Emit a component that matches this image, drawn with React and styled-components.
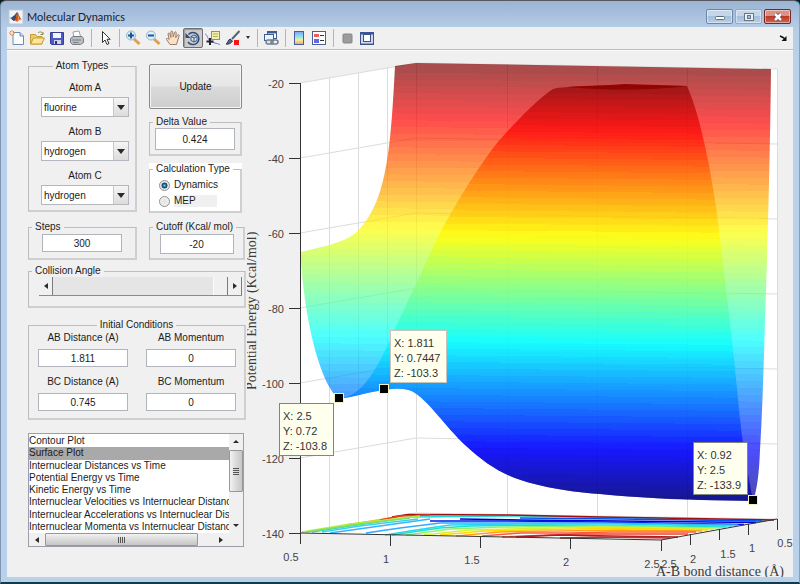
import React, { useState } from 'react';
import styled, { createGlobalStyle, css } from 'styled-components';

const GlobalStyle = createGlobalStyle`
  *, *::before, *::after { box-sizing: border-box; }
  body {
    margin: 0;
    background: #0b1a24;
    color: #1c1c1c;
    font: 10px/12px "Liberation Sans", Arial, sans-serif;
  }
  button, input, select { font: inherit; color: inherit; margin: 0; }
`;

/* ---------- window frame ---------- */

const Frame = styled.div`
  min-height: 100vh;
  display: flex;
  flex-direction: column;
  padding: 0 6px 5px 6px;
  border: 1px solid #4fb7cf;
  border-top-color: #5a5a62;
  border-left-color: #7f95ad;
  border-bottom: 2px solid #123c48;
  border-radius: 6px 6px 0 0;
  background: linear-gradient(#9ab4d2, #b5cce7 26px, #b9d1ea 60px);
`;

const TitleBar = styled.header`
  height: 26px;
  display: flex;
  align-items: center;
  gap: 3px;
  padding: 5px 2px 0 1px;
`;

const Title = styled.h1`
  flex: 1;
  margin: 0;
  font: 11px/14px Lato, "Open Sans", sans-serif;
  color: #17202c;
`;

const WindowButtons = styled.div`
  display: flex;
  gap: 2px;
`;

const WindowButton = styled.button`
  width: 27px;
  height: 15px;
  padding: 0;
  display: grid;
  place-items: center;
  border: 1px solid ${p => (p.$close ? '#6d2a2a' : p.$dim ? '#8fabc9' : '#6c86a6')};
  border-radius: 2px;
  box-shadow: inset 0 0 0 1px rgba(255, 255, 255, 0.45);
  background: ${p =>
    p.$close
      ? 'linear-gradient(#dc9186 0 45%, #bd3a26 50%, #d1644f)'
      : 'linear-gradient(#c3d6ea 0 45%, #a5bedb 50%, #b7cde6)'};
`;

const Client = styled.main`
  flex: 1;
  display: flex;
  flex-direction: column;
  background: #f0f0f0;
`;

const Toolbar = styled.div`
  height: 23px;
  display: flex;
  align-items: center;
  border-bottom: 1px solid #bdbdbd;
  box-shadow: 0 1px 0 #fafafa;
`;

const Tool = styled.button`
  width: ${p => (p.$narrow ? 10 : 20)}px;
  height: 20px;
  padding: 0;
  display: grid;
  place-items: center;
  border: 1px solid transparent;
  border-radius: 2px;
  background: none;
  ${p => p.$pressed && css`
    border-color: #6e6e6e;
    background: #cbcbcb;
    box-shadow: inset 1px 1px 1px #9a9a9a;
  `}
`;

const Separator = styled.span`
  width: 8px;
  height: 18px;
  display: grid;
  justify-content: center;
  &::before { content: ''; width: 1px; background: #b4b4b4; }
`;

const Spacer = styled.span`
  flex: 1;
`;

const Body = styled.div`
  flex: 1;
  display: grid;
  grid-template-columns: 239px minmax(0, 1fr);
`;

/* ---------- control column ---------- */

const Controls = styled.form`
  padding: 10px 0 0 21px;
  display: flex;
  flex-direction: column;
`;

const Row = styled.div`
  display: grid;
  grid-template-columns: 109px 96px;
  gap: 12px;
  margin-bottom: ${p => p.$after || 0}px;
`;

const SideStack = styled.div`
  display: flex;
  flex-direction: column;
  gap: 7px;
  padding: 4px 3px 0 0;
`;

const Group = styled.fieldset`
  min-width: 0;
  height: ${p => p.$h}px;
  margin: 0 0 ${p => p.$after || 0}px;
  padding: 0;
  border: 1px solid #bdbdbd;
  border-width: 1px 2px 2px 1px;
  border-right-color: #cfcfcf;
  border-bottom-color: #cfcfcf;
`;

const Legend = styled.legend`
  height: 12px;
  padding: 0 3px;
  margin-left: ${p => (p.$center ? 'auto' : '3px')};
  margin-right: auto;
  white-space: nowrap;
`;

const WhitePanel = styled.div`
  background: #fff;
`;

const UpdateButton = styled.button`
  height: 45px;
  border: 1px solid #8a8a8a;
  border-radius: 2px;
  box-shadow: inset 0 0 0 1px #f4f4f4;
  background: linear-gradient(#efefef, #e6e6e6 48%, #dadada 52%, #cdcdcd);
`;

const Field = styled.label`
  display: flex;
  flex-direction: column;
  align-items: center;
  gap: ${p => p.$gap || 3}px;
  white-space: nowrap;
`;

const AtomFields = styled.div`
  display: flex;
  flex-direction: column;
  gap: 9px;
  padding: 10px 0 0 6px;
`;

const SelectBox = styled.span`
  width: 88px;
  height: 20px;
  display: grid;
  grid-template-columns: 1fr 15px;
  border: 1px solid #b4b7bd;
  background: #fff;
`;

const Select = styled.select`
  grid-area: 1 / 1 / 2 / 3;
  appearance: none;
  border: 0;
  padding: 1px 2px 0;
  background: transparent;
`;

const Arrow = styled.span`
  grid-area: 1 / 2;
  display: grid;
  place-items: center;
  pointer-events: none;
  border-left: 1px solid #c9c9c9;
  background: linear-gradient(#f5f5f5, #dcdcdc);
`;

const TextBox = styled.input`
  width: ${p => p.$w}px;
  height: ${p => p.$h || 18}px;
  padding: 0;
  text-align: center;
  border: 1px solid #b1b4bb;
  background: #fff;
`;

const Center = styled.div`
  display: grid;
  justify-content: center;
  padding-top: ${p => p.$top || 0}px;
`;

const RadioList = styled.div`
  padding: 2px 0 0 9px;
`;

const RadioRow = styled.label`
  height: 16px;
  display: flex;
  align-items: center;
  gap: 4px;
`;

const RadioText = styled.span`
  width: 43px;
  background: ${p => (p.$shade ? '#f0f0f0' : 'transparent')};
`;

const Radio = styled.input`
  appearance: none;
  width: 11px;
  height: 11px;
  border: 1px solid #8e8f8f;
  border-radius: 50%;
  background: radial-gradient(#e2e2e2, #f6f6f6);
  &:checked {
    background: radial-gradient(circle at 50% 50%, #7fd0ee 0, #1c6c9c 25%, #0f3855 42%, #e6ebee 52%);
  }
`;

const SliderBar = styled.div`
  height: 19px;
  margin: 0 2px 0 10px;
  display: flex;
  border-bottom: 1px solid #8b8b8b;
`;

const SliderButton = styled.button`
  width: 14px;
  padding: 0;
  display: grid;
  place-items: center;
  border: 0;
  border-right: 1px solid #7b7b7b;
  background: #f0f0f0;
`;

const Range = styled.input`
  appearance: none;
  flex: 1;
  min-width: 0;
  background: #e5e5e5;
  &::-webkit-slider-thumb {
    appearance: none;
    width: 15px;
    height: 18px;
    background: #f0f0f0;
    border-right: 1px solid #7b7b7b;
    border-left: 1px solid #fafafa;
  }
`;

const Quad = styled.div`
  display: grid;
  grid-template-columns: 90px 90px;
  gap: 9px 18px;
  padding: 1px 0 0 9px;
`;

/* ---------- plot list ---------- */

const ListFrame = styled.div`
  width: 216px;
  height: 114px;
  display: grid;
  grid-template-columns: minmax(0, 1fr) 14px;
  grid-template-rows: minmax(0, 1fr) 13px;
  border: 1px solid #9b9fa8;
  background: #f0f0f0;
`;

const List = styled.ul`
  margin: 0;
  padding: 1px 0 0;
  list-style: none;
  display: grid;
  grid-template-rows: repeat(8, minmax(0, 1fr));
  overflow: hidden;
  background: #fff;
`;

const Item = styled.li`
  white-space: nowrap;
  overflow: hidden;
  cursor: default;
  background: ${p => (p.$selected ? '#a9a9a9' : 'transparent')};
`;

const ScrollBar = styled.div`
  display: flex;
  flex-direction: ${p => (p.$vertical ? 'column' : 'row')};
`;

const ScrollButton = styled.button`
  flex: 0 0 16px;
  padding: 0;
  border: 0;
  background: none;
  display: grid;
  place-items: center;
`;

const Thumb = styled.span`
  flex: 0 0 ${p => (p.$vertical ? 42 : 153)}px;
  display: grid;
  place-items: center;
  border: 1px solid #989898;
  border-radius: 1px;
  background: linear-gradient(${p => (p.$vertical ? '90deg' : '180deg')}, #f2f2f2, #dadada 50%, #c6c6c6);
`;

const Gap = styled.span`
  flex: 1;
`;

const Figure = styled.svg`
  display: block;
  width: 100%;
  height: auto;
  overflow: visible;
  font-family: "Liberation Sans", Arial, sans-serif;
  font-size: 11px;
`;

const LatexLabel = styled.text`
  font-family: "Liberation Serif", "Times New Roman", serif;
  font-size: 14px;
  fill: #3c3c3c;
`;

/* ---------- icons ---------- */

const Icon = ({ children, size = 16 }) => (
  <svg width={size} height={size} viewBox={`0 0 ${size} ${size}`} fill="none" aria-hidden="true">
    {children}
  </svg>
);

const Triangle = ({ dir }) => (
  <svg width="8" height="8" viewBox="0 0 8 8" fill="#2b2b2b" aria-hidden="true">
    <path d={{
      down: 'M0 2h8L4 7z',
      smallDown: 'M1 3h6L4 6z',
      up: 'M1 5h6L4 2z',
      left: 'M6 1v6L2 4z',
      right: 'M2 1v6l4-3z',
    }[dir]} />
  </svg>
);

const MatlabIcon = () => (
  <Icon>
    <rect x="1" y="1" width="14" height="14" fill="#f3f4f6" stroke="#bcc7d4" />
    <path d="M2 9l4-2 3 2-3 3z" fill="#2b6ea8" />
    <path d="M5 7c2 0 3-4 4.500-4L8 9l-2 3-2-1.500z" fill="#3b4a78" />
    <path d="M9.500 3c1.500 2 2 6 4.500 8-2-1-3 0-5 2-.5-1-1.500-1.500-3-1 2-2 2.500-6 3.500-9z" fill="#cf4a1d" />
    <path d="M9.500 3c.7 3 .7 6-.5 10 1-1 1.500-2 2.500-2.200C11 8 10.500 5 9.500 3z" fill="#ef9a35" />
  </Icon>
);

const icons = {
  new: (
    <Icon>
      <path d="M4 2.500h7l3.500 3.500v8.500H4z" fill="#fcfdff" stroke="#6f88b8" />
      <path d="M11 2.500V6h3.500" fill="#c9d7ee" stroke="#6f88b8" />
      <path d="M3 0v6M0 3h6M1 1l4 4M5 1L1 5" stroke="#e38a54" />
      <circle cx="3" cy="3" r="1.200" fill="#fff0a0" />
    </Icon>
  ),
  open: (
    <Icon>
      <path d="M1.500 14V4.500h5l1.500 2h5V14z" fill="#f1cc5c" stroke="#c39a3b" />
      <path d="M1.500 14l3-6h11l-3 6z" fill="#ffe795" stroke="#c39a3b" />
      <path d="M9 3c2-2 4-1 5 1m0-2v2.500h-2.500" stroke="#8c8948" />
    </Icon>
  ),
  save: (
    <Icon>
      <path d="M1.500 2.500h13v12h-12l-1-1z" fill="#4b5ac4" stroke="#353f96" />
      <rect x="4" y="3" width="8" height="5" fill="#f3f5ff" />
      <rect x="5" y="10" width="7" height="4" fill="#d2d6e2" />
      <rect x="6" y="11" width="2" height="3" fill="#29358c" />
    </Icon>
  ),
  print: (
    <Icon>
      <path d="M5 8L4 2l6-1 2 7z" fill="#fff" stroke="#9a9fa8" />
      <path d="M1.500 8.500L4 6.500h9l1.500 2v4l-3 2H3.500l-2-2z" fill="#b9bdc6" stroke="#757b86" />
      <path d="M3 10h9M4 12.500h7" stroke="#7b818c" />
      <path d="M8 14l5-3" stroke="#e5c744" />
    </Icon>
  ),
  cursor: (
    <Icon><path d="M5.500 1.500v11L8 10l2 4.500 2-1-2-4.200h3.200z" fill="#fff" stroke="#303030" /></Icon>
  ),
  zoom: plus => (
    <Icon>
      <path d="M9 9l5.500 5" stroke="#dda04b" strokeWidth="3" />
      <circle cx="6" cy="5.500" r="4.500" fill="#d8f1fa" stroke="#8fb6cc" />
      <path d={plus ? 'M3 5.500h6M6 2.500v6' : 'M3 5.500h6'} stroke="#28509a" strokeWidth="2" />
    </Icon>
  ),
  hand: (
    <Icon>
      <path d="M5 14.500L1.500 9.500C1 8 2.500 7.800 4.200 9.500L3 4c0-1.300 1.500-1.300 1.800 0L6 7.500 5.800 2c.2-1.200 1.700-1.200 1.900 0L8.300 7 9.500 2.500c.4-1.100 1.800-.8 1.700.4L10.700 7.700 12.600 5c.7-.9 2-.2 1.500.9L12.500 11l-1 3.500z" fill="#fbe0c2" stroke="#9a7d6c" />
    </Icon>
  ),
  rotate: (
    <Icon>
      <path d="M3.500 4.500A6 6 0 1 1 3 12" stroke="#2f4c7c" strokeWidth="1.500" />
      <path d="M0.500 3v5h5z" fill="#2f4c7c" />
      <path d="M6 6.500l3-1.500 3 1.500v4L9 12l-3-1.500zM6 6.500L9 8l3-1.500M9 8v4" stroke="#3c5c88" fill="#d7e2ef" />
    </Icon>
  ),
  data: (
    <Icon>
      <rect x="6.500" y="1.500" width="8" height="8" fill="#f2efad" stroke="#96935a" />
      <path d="M8 4h5M8 6.500h5" stroke="#b4b06d" />
      <path d="M0 4c3 1 2 6 7 8s6 1 8 3" stroke="#5e6ff0" />
      <path d="M5 8v7M1.500 11.500h7" stroke="#222" strokeWidth="2" />
    </Icon>
  ),
  brush: (
    <Icon>
      <path d="M14.500 1L7 9" stroke="#56647a" strokeWidth="2" />
      <path d="M1 14c2-.5 1.500-4 4-5l2.500 2C6 13.500 3.500 14.500 1 14z" fill="#5a6881" stroke="#2d3747" />
      <rect x="9" y="10" width="5" height="5" fill="#ff1414" />
    </Icon>
  ),
  link: (
    <Icon>
      <rect x="4.500" y="1.500" width="9" height="7" fill="#fff" stroke="#3e5c96" />
      <path d="M4 2.500h10" stroke="#3e5c96" strokeWidth="2" />
      <rect x="1.500" y="4.500" width="9" height="6" fill="#eef3fa" stroke="#3e5c96" />
      <rect x="3" y="10" width="7" height="4" rx="2" fill="#dbe3ea" stroke="#6c8191" strokeWidth="1.500" />
      <rect x="8" y="10" width="7" height="4" rx="2" stroke="#6c8191" strokeWidth="1.500" />
    </Icon>
  ),
  colorbar: (
    <Icon>
      <defs>
        <linearGradient id="mini" x2="0" y2="1">
          <stop stopColor="#8d9cf2" />
          <stop offset=".35" stopColor="#7fe1f2" />
          <stop offset=".65" stopColor="#f3efa0" />
          <stop offset="1" stopColor="#f59a77" />
        </linearGradient>
      </defs>
      <rect x="3.500" y="1.500" width="9" height="13" fill="url(#mini)" stroke="#495f95" />
    </Icon>
  ),
  legend: (
    <Icon>
      <rect x="1.500" y="1.500" width="13" height="13" fill="#fff" stroke="#495f95" />
      <rect x="3" y="4" width="5" height="3" fill="#f05a5a" />
      <rect x="3" y="9" width="5" height="4" fill="#6464ee" />
      <path d="M9 5.500h4M9 10.500h4" stroke="#333" />
    </Icon>
  ),
  square: (
    <Icon><rect x="4" y="4" width="9" height="9" rx="1" fill="#9b9b9b" stroke="#868686" /></Icon>
  ),
  dock: (
    <Icon>
      <rect x="1.500" y="2.500" width="13" height="12" fill="#cfdae8" stroke="#3b5388" />
      <path d="M1 3.500h14" stroke="#3457a2" strokeWidth="2" />
      <rect x="4.500" y="4.500" width="7" height="7" fill="#fff" stroke="#3b5388" />
      <path d="M2 13.500h12" stroke="#aaa28e" />
    </Icon>
  ),
  corner: (
    <Icon size={8}><path d="M1 2l3 1.500L6 5" stroke="#111" strokeWidth="1.500" /><path d="M7.500 2v5h-5z" fill="#111" /></Icon>
  ),
};

/* ---------- surface plot ---------- */

const clamp = v => Math.round(255 * Math.max(0, Math.min(1, v)));
const jet = v =>
  `rgb(${clamp(1.5 - Math.abs(4 * v - 3))},${clamp(1.5 - Math.abs(4 * v - 2))},${clamp(1.5 - Math.abs(4 * v - 1))})`;

const LEVELS = 64;
const JetGradient = ({ id, top }) => (
  <linearGradient id={id} gradientUnits="userSpaceOnUse" x1="400" x2="396" y1={top} y2="500">
    {Array.from({ length: LEVELS }, (_, i) => {
      const color = jet(1 - (i + 0.5) / LEVELS);
      return (
        <React.Fragment key={i}>
          <stop offset={i / LEVELS} stopColor={color} />
          <stop offset={(i + 1) / LEVELS} stopColor={color} />
        </React.Fragment>
      );
    })}
  </linearGradient>
);

const lowerEdge =
  'C350 398 372 391 384 390 C398 388 408 388 415 393 C430 403 446 427 465 445 C480 459 494 469 510 476 C532 485 560 491 600 494 C650 499 700 500 753 501';

const fullSurface =
  `M395 66 L416 63 L771 69 C770 160 768 230 766 290 C764 350 763 400 760 450 C759 475 757 490 753 501 L700 500 C700 500 650 499 600 494 C560 491 532 485 510 476 C494 469 480 459 465 445 C446 427 430 403 415 393 C408 388 398 388 384 390 C372 391 350 398 339 399 C322 386 306 330 301 262 V252 C330 245 352 241 362 226 C388 196 391 140 395 66Z`;

const frontSurface =
  `M339 399 ${lowerEdge} C747 470 742 440 739 410 C732 330 722 260 717 213 C710 165 700 115 687 86 L625 85 L583 86 C570 87 560 87 553 89 C535 101 512 126 497 143 C470 178 448 218 438 237 C424 266 412 294 400 318 C382 357 368 395 339 399Z`;

const contours = [
  ['#ffb000', 'M346 525L392 518L408 515'],
  ['#20d8d8', 'M312 532L350 526L412 517L520 516L640 518L766 521'],
  ['#a01010', 'M392 517L408 514.500L507 515L600 517L774 520'],
  ['#e8431c', 'M380 520L400 516L430 515'],
  ['#b0f040', 'M302 532L350 524L395 519L420 516'],
  ['#7de060', 'M306 532L360 524L410 518'],
  ['#3ad0f4', 'M322 532L360 526L418 519'],
  ['#35b4ff', 'M330 533L380 526L430 519'],
  ['#0050ff', 'M520 518L620 519L762 521'],
  ['#0000c8', 'M460 519L520 520L620 521L756 522.500'],
  ['#0018e8', 'M430 521L500 521L600 522L744 524.500'],
  ['#35a8ff', 'M366 533L400 528L440 523L500 523L600 523L738 525'],
  ['#22d8f8', 'M385 535L416 530L450 525L520 524L620 524L732 526'],
  ['#1fe0c8', 'M392 535L440 528L470 526L540 525L640 526L726 527'],
  ['#8ff070', 'M406 535L450 529L500 527L600 526L720 528'],
  ['#d8f030', 'M424 535L470 530L510 529L600 527L714 529'],
  ['#ffd800', 'M440 535L484 531L530 530L620 528L708 530'],
  ['#ff9c20', 'M456 536L500 532L560 531L620 530L702 531'],
  ['#ff5838', 'M482 536L520 533L570 533L610 532L696 532'],
  ['#f04030', 'M502 537L550 535L580 534L630 534L688 534'],
  ['#a82020', 'M516 537L560 535L610 536L678 537'],
  ['#c03030', 'M560 538L600 537L670 538'],
];

const zTicks = [-20, -40, -60, -80, -100, -120, -140];
const xTicks = [
  [300, 533, '0.5', 291, 561], [390, 535, '1', 386, 563], [480, 537, '1.5', 472, 564],
  [570, 538, '2', 566, 566], [661, 540, '2.5', 652, 568],
];
const yTicks = [
  [661, 540, '2.5', 669, 568], [690, 534, '2', 693, 563], [719, 529, '1.5', 728, 558],
  [748, 524, '1', 752, 552], [777, 519, '0.5', 785, 547],
];
const dataTips = [
  { mx: 384, my: 389, x: 391, y: 331, w: 56, lines: ['X: 1.811', 'Y: 0.7447', 'Z: -103.3'], edge: '#c4c4bc' },
  { mx: 339, my: 398, x: 280, y: 404, w: 54, lines: ['X: 2.5', 'Y: 0.72', 'Z: -103.8'], edge: '#84847e' },
  { mx: 753, my: 500, x: 694, y: 443, w: 54, lines: ['X: 0.92', 'Y: 2.5', 'Z: -133.9'], edge: '#84847e' },
];

function SurfacePlot() {
  return (
    <Figure viewBox="246 50 547 527" role="img" aria-label="Potential energy surface">
      <defs>
        <JetGradient id="jetBack" top="66" />
        <JetGradient id="jetFront" top="78" />
        <clipPath id="plotArea"><rect x="247" y="50" width="546" height="527" /></clipPath>
      </defs>
      <path d="M300 83L416 63L777 69V519L661 540L300 533Z" fill="#fff" />
      <g stroke="#dcdcdc" fill="none" shapeRendering="crispEdges">
        {[[329, 78, 528], [358, 73, 522], [387, 68, 517], [416, 63, 512], [507, 65, 514], [597, 66, 516], [687, 68, 517], [777, 69, 519]].map(
          ([x, a, b]) => <path key={x} d={`M${x}.5 ${a}V${b}`} />
        )}
      </g>
      <g stroke="#dcdcdc" fill="none">
        {zTicks.map((z, i) => <path key={z} d={`M300 ${83 + i * 75}L416 ${63 + i * 75}L777 ${69 + i * 75}`} />)}
      </g>
      <path d={fullSurface} fill="url(#jetBack)" opacity="0.7" />
      <path d={frontSurface} fill="url(#jetFront)" opacity="0.7" />
      <path d="M568 87L610 85L625 84L687 86C660 90 610 91 568 87Z" fill="#900404" />
      <g fill="none" strokeWidth="1.500">
        {contours.map(([color, d]) => <path key={d} d={d} stroke={color} />)}
      </g>
      <g stroke="#333" fill="none">
        <path d="M300.500 83V533M300 533L661 540L777 519" />
        {zTicks.map((z, i) => <path key={z} d={`M289 ${83.5 + i * 75}h11`} />)}
        {[...xTicks, ...yTicks].map(([x, y], i) => <path key={i} d={`M${x}.5 ${y}v11`} />)}
      </g>
      <g fill="#444">
        {zTicks.map((z, i) => <text key={z} x="284" y={88 + i * 75} textAnchor="end">{z}</text>)}
        {[...xTicks, ...yTicks].map(([, , label, lx, ly]) => (
          <text key={lx} x={lx} y={ly} textAnchor="middle">{label}</text>
        ))}
      </g>
      <g clipPath="url(#plotArea)">
        <LatexLabel transform="translate(256 390) rotate(-90)">Potential Energy (Kcal/mol)</LatexLabel>
        <LatexLabel x="656" y="576">A-B bond distance (Å)</LatexLabel>
      </g>
      {dataTips.map(t => (
        <g key={t.x}>
          <rect x={t.mx - 5} y={t.my - 5} width="10" height="10" fill="#f4f2b8" />
          <rect x={t.mx - 4} y={t.my - 4} width="8" height="8" fill="#000" />
          <rect x={t.x - 0.5} y={t.y - 0.5} width={t.w} height="52" fill="#ffffee" stroke={t.edge} />
          {t.lines.map((line, i) => (
            <text key={line} x={t.x + 3} y={t.y + 16 + i * 15} fill="#333">{line}</text>
          ))}
        </g>
      ))}
    </Figure>
  );
}

/* ---------- application ---------- */

const atoms = ['fluorine', 'hydrogen', 'chlorine', 'deuterium'];
const plots = [
  'Contour Plot',
  'Surface Plot',
  'Internuclear Distances vs Time',
  'Potential Energy vs Time',
  'Kinetic Energy vs Time',
  'Internuclear Velocities vs Internuclear Distance',
  'Internuclear Accelerations vs Internuclear Distance',
  'Internuclear Momenta vs Internuclear Distance',
];

const AtomSelect = ({ name, value }) => (
  <Field>
    {name}
    <SelectBox>
      <Arrow><Triangle dir="down" /></Arrow>
      <Select defaultValue={value}>
        {atoms.map(a => <option key={a}>{a}</option>)}
      </Select>
    </SelectBox>
  </Field>
);

export default function App() {
  const [selected, setSelected] = useState('Surface Plot');
  return (
    <>
      <GlobalStyle />
      <Frame>
        <TitleBar>
          <MatlabIcon />
          <Title>Molecular Dynamics</Title>
          <WindowButtons>
            <WindowButton aria-label="Minimize">
              <svg width="12" height="10" viewBox="0 0 12 10"><rect x="1.500" y="4.500" width="9" height="3" rx="1" fill="#fff" stroke="#5d6979" /></svg>
            </WindowButton>
            <WindowButton aria-label="Maximize" $dim>
              <svg width="12" height="10" viewBox="0 0 12 10" fill="none"><rect x="1.500" y="1.500" width="9" height="7" fill="#eef1f4" stroke="#68778a" /><rect x="4.500" y="3.500" width="3" height="3" fill="#a9bfd8" stroke="#68778a" /></svg>
            </WindowButton>
            <WindowButton aria-label="Close" $close>
              <svg width="12" height="10" viewBox="0 0 12 10"><path d="M3 2l6 6M9 2L3 8" stroke="#5e4a50" strokeWidth="4" /><path d="M3 2l6 6M9 2L3 8" stroke="#fff" strokeWidth="2.500" /></svg>
            </WindowButton>
          </WindowButtons>
        </TitleBar>
        <Client>
          <Toolbar role="toolbar">
            <Tool aria-label="New figure">{icons.new}</Tool>
            <Tool aria-label="Open">{icons.open}</Tool>
            <Tool aria-label="Save">{icons.save}</Tool>
            <Tool aria-label="Print">{icons.print}</Tool>
            <Separator />
            <Tool aria-label="Edit plot">{icons.cursor}</Tool>
            <Separator />
            <Tool aria-label="Zoom in">{icons.zoom(true)}</Tool>
            <Tool aria-label="Zoom out">{icons.zoom(false)}</Tool>
            <Tool aria-label="Pan">{icons.hand}</Tool>
            <Tool aria-label="Rotate 3D" $pressed>{icons.rotate}</Tool>
            <Tool aria-label="Data cursor">{icons.data}</Tool>
            <Tool aria-label="Brush">{icons.brush}</Tool>
            <Tool aria-label="Brush options" $narrow>
              <svg width="6" height="4" viewBox="0 0 6 4"><path d="M1 0h4L3 3z" fill="#333" /></svg>
            </Tool>
            <Separator />
            <Tool aria-label="Link plot">{icons.link}</Tool>
            <Separator />
            <Tool aria-label="Insert colorbar">{icons.colorbar}</Tool>
            <Tool aria-label="Insert legend">{icons.legend}</Tool>
            <Separator />
            <Tool aria-label="Hide plot tools">{icons.square}</Tool>
            <Tool aria-label="Show plot tools">{icons.dock}</Tool>
            <Spacer />
            <Tool aria-label="Dock figure">{icons.corner}</Tool>
          </Toolbar>
          <Body>
            <Controls onSubmit={e => e.preventDefault()}>
              <Row $after={8}>
                <Group $h={152}>
                  <Legend $center>Atom Types</Legend>
                  <AtomFields>
                    <AtomSelect name="Atom A" value="fluorine" />
                    <AtomSelect name="Atom B" value="hydrogen" />
                    <AtomSelect name="Atom C" value="hydrogen" />
                  </AtomFields>
                </Group>
                <SideStack>
                  <UpdateButton type="submit">Update</UpdateButton>
                  <Group $h={40}>
                    <Legend>Delta Value</Legend>
                    <Center><TextBox aria-label="Delta Value" defaultValue="0.424" $w={80} $h={22} /></Center>
                  </Group>
                  <WhitePanel>
                    <Group $h={50}>
                      <Legend>Calculation Type</Legend>
                      <RadioList>
                        <RadioRow><Radio type="radio" name="calc" defaultChecked /><RadioText>Dynamics</RadioText></RadioRow>
                        <RadioRow><Radio type="radio" name="calc" /><RadioText $shade>MEP</RadioText></RadioRow>
                      </RadioList>
                    </Group>
                  </WhitePanel>
                </SideStack>
              </Row>
              <Row $after={5}>
                <Group $h={39}>
                  <Legend>Steps</Legend>
                  <Center $top={1}><TextBox aria-label="Steps" defaultValue="300" $w={80} /></Center>
                </Group>
                <Group $h={39}>
                  <Legend>Cutoff (Kcal/ mol)</Legend>
                  <Center $top={1}><TextBox aria-label="Cutoff (Kcal/ mol)" defaultValue="-20" $w={74} $h={20} /></Center>
                </Group>
              </Row>
              <Group $h={43} $after={11}>
                <Legend>Collision Angle</Legend>
                <SliderBar>
                  <SliderButton type="button" aria-label="Decrease angle"><Triangle dir="left" /></SliderButton>
                  <Range type="range" aria-label="Collision Angle" min="0" max="180" defaultValue="180" />
                  <SliderButton type="button" aria-label="Increase angle"><Triangle dir="right" /></SliderButton>
                </SliderBar>
              </Group>
              <Group $h={101} $after={13}>
                <Legend $center>Initial Conditions</Legend>
                <Quad>
                  <Field $gap={5}>AB Distance (A)<TextBox $w={90} defaultValue="1.811" /></Field>
                  <Field $gap={5}>AB Momentum<TextBox $w={90} defaultValue="0" /></Field>
                  <Field $gap={5}>BC Distance (A)<TextBox $w={90} defaultValue="0.745" /></Field>
                  <Field $gap={5}>BC Momentum<TextBox $w={90} defaultValue="0" /></Field>
                </Quad>
              </Group>
              <ListFrame>
                <List role="listbox" aria-label="Plot">
                  {plots.map(p => (
                    <Item key={p} role="option" aria-selected={p === selected} $selected={p === selected} onClick={() => setSelected(p)}>
                      {p}
                    </Item>
                  ))}
                </List>
                <ScrollBar $vertical>
                  <ScrollButton type="button" aria-label="Scroll up"><Triangle dir="up" /></ScrollButton>
                  <Thumb $vertical><svg width="6" height="7" viewBox="0 0 6 7"><path d="M0 .5h6M0 2.500h6M0 4.500h6M0 6.500h6" stroke="#555" /></svg></Thumb>
                  <Gap />
                  <ScrollButton type="button" aria-label="Scroll down"><Triangle dir="smallDown" /></ScrollButton>
                </ScrollBar>
                <ScrollBar>
                  <ScrollButton type="button" aria-label="Scroll left"><Triangle dir="left" /></ScrollButton>
                  <Thumb><svg width="7" height="6" viewBox="0 0 7 6"><path d="M.5 0v6M2.500 0v6M4.500 0v6M6.500 0v6" stroke="#555" /></svg></Thumb>
                  <Gap />
                  <ScrollButton type="button" aria-label="Scroll right"><Triangle dir="right" /></ScrollButton>
                </ScrollBar>
              </ListFrame>
            </Controls>
            <SurfacePlot />
          </Body>
        </Client>
      </Frame>
    </>
  );
}
